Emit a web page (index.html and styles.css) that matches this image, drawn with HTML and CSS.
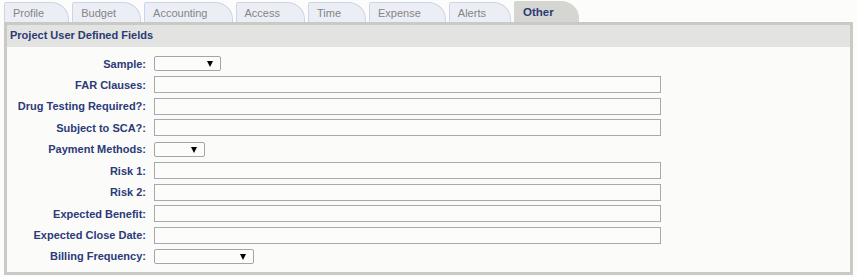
FILE: index.html
```html
<!DOCTYPE html>
<html lang="en">
<head>
    <meta charset="UTF-8">
    <title>Project User Defined Fields</title>
    <link rel="stylesheet" href="styles.css">
</head>
<body>
    <ul class="tabs">
        <li class="tab">Profile</li>
        <li class="tab">Budget</li>
        <li class="tab">Accounting</li>
        <li class="tab">Access</li>
        <li class="tab">Time</li>
        <li class="tab">Expense</li>
        <li class="tab">Alerts</li>
        <li class="tab active">Other</li>
    </ul>

    <div class="panel">
        <div class="panel-header">Project User Defined Fields</div>
        <form class="fields">
            <label>Sample:</label>
            <span class="select w-sample"><select></select></span>

            <label>FAR Clauses:</label>
            <input type="text">

            <label>Drug Testing Required?:</label>
            <input type="text">

            <label>Subject to SCA?:</label>
            <input type="text">

            <label>Payment Methods:</label>
            <span class="select w-payment"><select></select></span>

            <label>Risk 1:</label>
            <input type="text">

            <label>Risk 2:</label>
            <input type="text">

            <label>Expected Benefit:</label>
            <input type="text">

            <label>Expected Close Date:</label>
            <input type="text">

            <label>Billing Frequency:</label>
            <span class="select w-billing"><select></select></span>
        </form>
    </div>
</body>
</html>
```

FILE: styles.css
```css
body {
    margin: 0;
    padding: 2px 0 0 4px;
    background: #fcfdfb;
    font-family: Arial, "Liberation Sans", sans-serif;
    font-size: 11px;
}

/* Tabs */
.tabs {
    display: flex;
    list-style: none;
    margin: 0;
    padding: 0;
    height: 20px;
}

.tab {
    height: 19px;
    line-height: 20px;
    padding: 0 24px 0 8px;
    margin-right: 3px;
    background: #eceef5;
    color: #858585;
    border: 1px solid #cdd4ec;
    border-bottom: none;
    border-top-right-radius: 18px 17px;
    border-top-left-radius: 2px;
}

.tab.active {
    height: 20px;
    margin-top: -1px;
    background: #d5d6d2;
    border-color: #d5d6d2;
    color: #2b3a73;
    font-weight: bold;
    font-size: 11.5px;
    padding: 0 24px 0 8px;
}

/* Panel */
.panel {
    width: 843px;
    border: 3px solid #c9cac6;
    background: #fbfcfa;
    height: 247px;
}

.panel-header {
    height: 22px;
    line-height: 20px;
    padding-left: 3px;
    background: #e3e4e1;
    color: #2b3a73;
    font-weight: bold;
}

.fields {
    display: grid;
    grid-template-columns: 139px 507px;
    grid-auto-rows: 17px;
    column-gap: 8px;
    row-gap: 4.45px;
    align-items: center;
    padding-top: 8px;
    margin: 0;
}

.fields label {
    text-align: right;
    color: #2b3a78;
    font-weight: bold;
    white-space: nowrap;
}

.fields input {
    box-sizing: border-box;
    width: 507px;
    height: 17px;
    margin: 0;
    border: 1px solid #a9a9a9;
    background: #fcfdfb;
}

/* Dropdowns */
.select {
    position: relative;
    display: block;
    height: 15px;
}

.select select {
    appearance: none;
    -webkit-appearance: none;
    box-sizing: border-box;
    width: 100%;
    height: 15px;
    margin: 0;
    border: 1px solid #a5a5a5;
    border-radius: 2px;
    background: #fcfdfb;
}

.select::after {
    content: '';
    position: absolute;
    right: 8px;
    top: 5px;
    border-left: 3px solid transparent;
    border-right: 3px solid transparent;
    border-top: 6px solid #000;
}

.w-sample { width: 67px; }
.w-payment { width: 51px; }
.w-billing { width: 100px; }
```
